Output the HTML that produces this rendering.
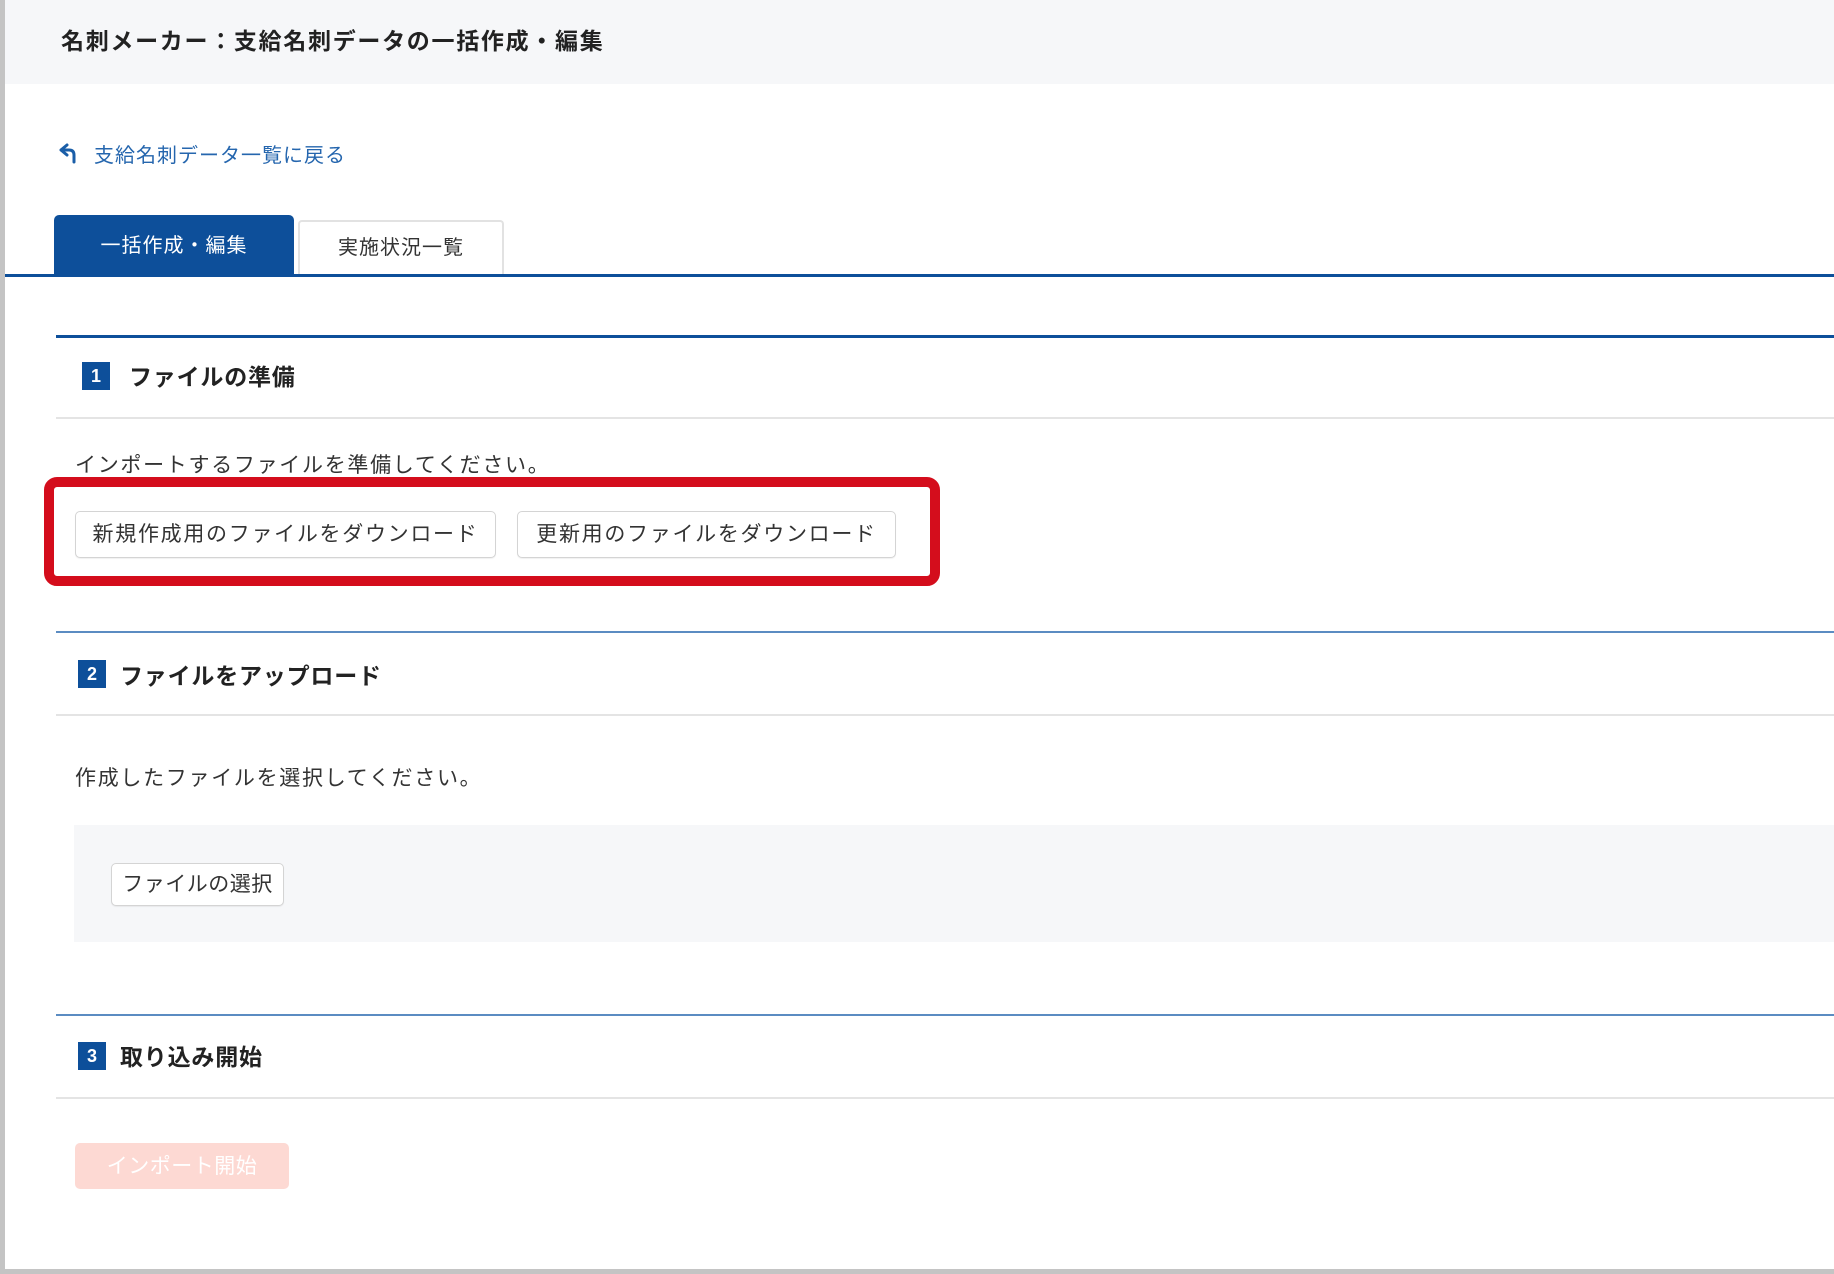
<!DOCTYPE html>
<html><head><meta charset="utf-8"><style>
*{margin:0;padding:0;box-sizing:border-box}
body{width:1834px;height:1274px;position:relative;overflow:hidden;background:#fff;font-family:"Liberation Sans","Noto Sans CJK JP",sans-serif;color:#333;letter-spacing:1.7px}
.a{position:absolute;white-space:nowrap}
.hdr{left:0;top:0;width:1834px;height:84px;background:#f6f7f9}
.lb{left:0;top:0;width:5px;height:1274px;background:#c4c4c4}
.bb{left:0;top:1269px;width:1834px;height:5px;background:#c4c4c4}
.btn{border:1.5px solid #d4d4d4;border-radius:5px;background:#fff;font-size:21px;color:#333;display:flex;align-items:center;justify-content:center;box-shadow:0 1px 1px rgba(0,0,0,.06)}
.badge{width:28px;height:28px;background:#0d4f9a;color:#fff;font-size:18px;font-weight:bold;display:flex;align-items:center;justify-content:center;letter-spacing:0}
.h{font-size:23px;font-weight:bold;color:#222;letter-spacing:0.8px}
.gl{left:56px;right:0;height:2px;background:#e4e4e4}
</style></head><body>
<div class="a hdr"></div>
<div class="a" style="left:61px;top:22px;font-size:23px;font-weight:bold;color:#222">名刺メーカー：支給名刺データの一括作成・編集</div>
<svg class="a" style="left:58px;top:143px" width="20" height="22" viewBox="0 0 20 22"><path d="M3 7 L9 2 M3 7 L9 12 M3 7 H11 Q16 7 16 12 V19" fill="none" stroke="#1a5ea8" stroke-width="3" stroke-linecap="round"/></svg>
<div class="a" style="left:94px;top:139px;font-size:20px;color:#2566ae;letter-spacing:1px">支給名刺データ一覧に戻る</div>
<div class="a" style="left:54px;top:215px;width:240px;height:61px;background:#0d4f9a;border-radius:5px 5px 0 0;color:#fff;font-size:20px;display:flex;align-items:center;justify-content:center;padding-bottom:4px;letter-spacing:1px">一括作成・編集</div>
<div class="a" style="left:298px;top:220px;width:206px;height:56px;border:2px solid #e2e2e2;border-bottom:none;border-radius:4px 4px 0 0;color:#333;font-size:20px;display:flex;align-items:center;justify-content:center;padding-bottom:8px;letter-spacing:1px">実施状況一覧</div>
<div class="a" style="left:5px;right:0;top:274px;height:3px;background:#0d4f9a"></div>

<div class="a" style="left:56px;right:0;top:335px;height:3px;background:#0d4f9a"></div>
<div class="a badge" style="left:82px;top:362px">1</div>
<div class="a h" style="left:129px;top:358px">ファイルの準備</div>
<div class="a gl" style="top:417px"></div>
<div class="a" style="left:75px;top:449px;font-size:21px">インポートするファイルを準備してください。</div>
<div class="a" style="left:44px;top:477px;width:896px;height:109px;border:10px solid #d40d1c;border-radius:13px"></div>
<div class="a btn" style="left:75px;top:511px;width:421px;height:47px;padding-bottom:3px">新規作成用のファイルをダウンロード</div>
<div class="a btn" style="left:517px;top:511px;width:379px;height:47px;padding-bottom:3px">更新用のファイルをダウンロード</div>

<div class="a" style="left:56px;right:0;top:631px;height:2px;background:#5b8cc2"></div>
<div class="a badge" style="left:78px;top:660px">2</div>
<div class="a h" style="left:120px;top:657px">ファイルをアップロード</div>
<div class="a gl" style="top:714px"></div>
<div class="a" style="left:75px;top:762px;font-size:21px">作成したファイルを選択してください。</div>
<div class="a" style="left:74px;right:0;top:825px;height:117px;background:#f6f7f9"></div>
<div class="a btn" style="left:111px;top:863px;width:173px;height:43px;padding-bottom:3px;letter-spacing:0.5px">ファイルの選択</div>

<div class="a" style="left:56px;right:0;top:1014px;height:2px;background:#5b8cc2"></div>
<div class="a badge" style="left:78px;top:1042px">3</div>
<div class="a h" style="left:120px;top:1038px">取り込み開始</div>
<div class="a gl" style="top:1097px"></div>
<div class="a" style="left:75px;top:1143px;width:214px;height:46px;background:#fdd9d3;border-radius:5px;color:#fff;font-size:21px;display:flex;align-items:center;justify-content:center;padding-bottom:3px;letter-spacing:0.5px">インポート開始</div>

<div class="a lb"></div>
<div class="a bb"></div>
</body></html>
